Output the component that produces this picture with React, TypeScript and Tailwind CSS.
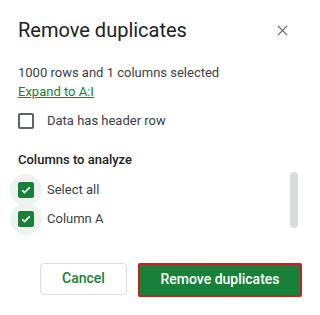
import React from 'react';

function CheckedBox() {
  return (
    <span className="relative flex h-8 w-8 items-center justify-center rounded-full bg-[#eef3ef]">
      <span className="flex h-4 w-4 items-center justify-center rounded-[2px] bg-[#188038]">
        <svg viewBox="0 0 16 16" className="h-3 w-3" fill="none" stroke="white" strokeWidth="2.2">
          <path d="M3 8.5l3 3 7-7" />
        </svg>
      </span>
    </span>
  );
}

export default function App() {
  return (
    <div className="h-[315px] w-[320px] bg-white px-[18px] font-['Roboto',sans-serif] text-[#3c4043]">
      <div className="flex items-center justify-between pt-[18px]">
        <h1 className="text-[20px] leading-[24px] text-[#202124]">Remove duplicates</h1>
        <button className="mr-[8px] flex h-6 w-6 items-center justify-center">
          <svg viewBox="0 0 12 12" className="h-[11px] w-[11px]" stroke="#5f6368" strokeWidth="1.3">
            <path d="M1 1l10 10M11 1L1 11" />
          </svg>
        </button>
      </div>

      <p className="mt-[21px] text-[13px] leading-[19px]">1000 rows and 1 columns selected</p>
      <a className="block text-[13px] leading-[19px] text-[#188038] underline">Expand to A:I</a>

      <label className="mt-[10px] flex items-center gap-[13px]">
        <span className="h-4 w-4 rounded-[2px] border-2 border-[#5f6368]" />
        <span className="text-[13px]">Data has header row</span>
      </label>

      <div className="mt-[19px] text-[13px] font-medium leading-[19px] text-[#202124]">Columns to analyze</div>

      <div className="mt-[3px] flex">
        <div className="-ml-2 mt-[2px] flex flex-1 flex-col">
          <label className="flex items-center gap-[5px]">
            <CheckedBox />
            <span className="text-[13px]">Select all</span>
          </label>
          <label className="-mt-[3px] flex items-center gap-[5px]">
            <CheckedBox />
            <span className="text-[13px]">Column A</span>
          </label>
        </div>
        <div className="mr-[4px] h-[56px] w-[8px] rounded-full bg-[#dadce0]" />
      </div>

      <div className="mt-[28px] flex justify-end gap-[11px]">
        <button className="h-[32px] w-[87px] rounded-[4px] border border-[#dadce0] text-[14px] font-medium text-[#188038]">
          Cancel
        </button>
        <button className="h-[34px] w-[164px] rounded-[2px] border-2 border-[#c5221f] bg-[#188038] text-[14px] font-medium text-white">
          Remove duplicates
        </button>
      </div>
    </div>
  );
}
